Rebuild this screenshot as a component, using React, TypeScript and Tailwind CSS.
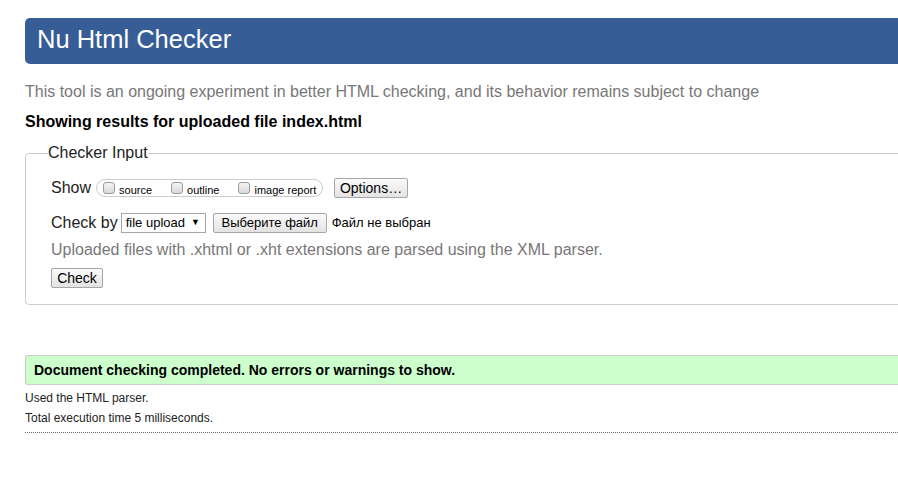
import React from "react";

const font = { fontFamily: '"Liberation Sans", Arial, sans-serif' };

function Box() {
  return (
    <span className="inline-block shrink-0 w-[12px] h-[12px] rounded-[3px] border border-[#9a9a9a] bg-linear-to-b from-[#f4f4f4] to-[#d9d9d9] mr-[4px] relative top-[-4px]" />
  );
}

function Btn({ children, className = "" }: { children: React.ReactNode; className?: string }) {
  return (
    <span
      className={
        "inline-flex shrink-0 whitespace-nowrap items-center justify-center h-[20px] border border-[#a6a6a6] rounded-[2px] bg-linear-to-b from-[#fbfbfb] to-[#e3e3e3] text-black " +
        className
      }
    >
      {children}
    </span>
  );
}

export default function App() {
  return (
    <div className="w-[898px] h-[479px] overflow-hidden bg-white" style={font}>
      <div className="w-[1000px] pl-[25px] pt-[18px]">
        <div className="h-[46px] bg-[#365d95] rounded-l-[5px] flex items-center pl-[12px]">
          <span className="text-white text-[25.5px] leading-none relative top-[-1px]">Nu Html Checker</span>
        </div>

        <p className="mt-[18px] text-[16px] leading-[20px] text-[#777]">
          This tool is an ongoing experiment in better HTML checking, and its behavior remains subject to change
        </p>
        <p className="mt-[10px] text-[16px] leading-[20px] font-bold text-black">
          Showing results for uploaded file index.html
        </p>

        <fieldset className="mt-[11px] border border-[#ccc] rounded-[4px] px-[25px] pb-[16px]">
          <legend className="ml-[-3px] text-[16px] leading-[20px] text-[#222]">Checker Input</legend>

          <div className="mt-[13px] h-[24px] flex items-center text-[16px] text-[#222] whitespace-nowrap">
            <span>Show</span>
            <span className="ml-[5px] shrink-0 h-[18px] w-[227px] border border-[#ccc] rounded-full flex items-center pl-[6px] text-[11px] text-black">
              <span className="flex shrink-0 items-end pt-[4px]">
                <Box />
                <span>source</span>
              </span>
              <span className="flex shrink-0 items-end pt-[4px] ml-[19px]">
                <Box />
                <span>outline</span>
              </span>
              <span className="flex shrink-0 items-end pt-[4px] ml-[19px]">
                <Box />
                <span>image report</span>
              </span>
            </span>
            <Btn className="ml-[11px] w-[74px] text-[14px]">Options…</Btn>
          </div>

          <div className="mt-[11px] h-[24px] flex items-center text-[16px] text-[#222] whitespace-nowrap">
            <span>Check by</span>
            <span className="ml-[3px] shrink-0 h-[20px] w-[85px] border border-[#a6a6a6] bg-white flex items-center pl-[4px] text-[13px] text-black">
              <span>file upload</span>
              <span className="ml-[6px] text-[9px]">▼</span>
            </span>
            <Btn className="ml-[7px] w-[114px] text-[13px]">Выберите файл</Btn>
            <span className="ml-[5px] text-[13px] text-black">Файл не выбран</span>
          </div>

          <p className="mt-[5px] text-[16px] leading-[20px] text-[#777]">
            Uploaded files with .xhtml or .xht extensions are parsed using the XML parser.
          </p>

          <div className="mt-[8px] flex">
            <Btn className="w-[52px] text-[14px]">Check</Btn>
          </div>
        </fieldset>

        <div className="mt-[50px] h-[30px] bg-[#ccffcc] border border-r-0 border-[#ccc] rounded-l-[3px] flex items-center pl-[8px]">
          <span className="text-[14px] font-bold text-black">Document checking completed. No errors or warnings to show.</span>
        </div>

        <div className="border-b border-dotted border-[#666] pb-[4px]">
          <p className="mt-[3px] text-[12px] leading-[20px] text-[#222]">Used the HTML parser.</p>
          <p className="text-[12px] leading-[20px] text-[#222]">Total execution time 5 milliseconds.</p>
        </div>
      </div>
    </div>
  );
}
